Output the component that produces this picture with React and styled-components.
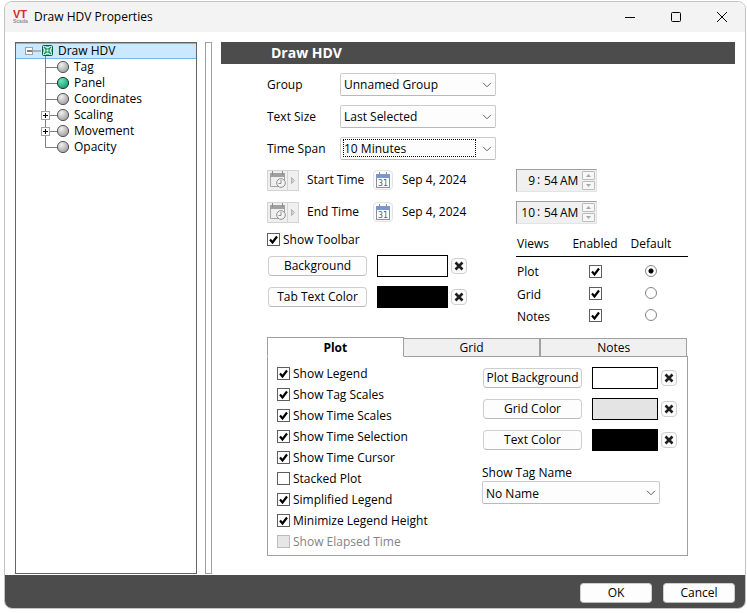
import React, { useState } from "react"
import styled, { createGlobalStyle } from "styled-components"

const GlobalStyle = createGlobalStyle`
    * {
        box-sizing: border-box;
    }
    body {
        margin: 0;
        background: #ffffff;
        color: #000000;
    }
    body, button, input, select {
        font-family: "Open Sans", "Noto Sans", sans-serif;
        font-size: 12px;
        line-height: 16px;
    }
`

const Window = styled.div`
    display: flex;
    flex-direction: column;
    min-height: calc(100vh - 5px);
    margin: 1px 1px 4px 4px;
    border: 1px solid #c3c3c3;
    border-radius: 8px;
    overflow: hidden;
    background: #ffffff;
`

const TitleBar = styled.header`
    display: flex;
    align-items: center;
    height: 30px;
    padding: 0 0 0 8px;
    background: #f3f3f3;
`

const Title = styled.h1`
    flex: 1;
    margin: 0 0 0 4px;
    font-size: 12px;
    font-weight: 400;
`

const WindowButton = styled.button`
    display: flex;
    align-items: center;
    justify-content: center;
    width: 46px;
    height: 30px;
    padding: 0;
    border: 0;
    background: transparent;
`

const Body = styled.div`
    display: flex;
    flex: 1;
    padding: 10px 10px 1px;
`

const Tree = styled.ul`
    width: 182px;
    margin: 0 8px 0 0;
    padding: 0;
    border: 1px solid #646464;
    list-style: none;
`

const TreeRow = styled.li`
    display: flex;
    align-items: center;
    height: 16px;
    padding-left: ${(props) => (props.$root ? "8px" : "24px")};
    background: ${(props) => (props.$root ? "#cce8ff" : "transparent")};
    box-shadow: ${(props) => (props.$root ? "inset 0 1px #70b8ea, inset 0 -1px #70b8ea" : "none")};
`

const TreeLabel = styled.span`
    margin-left: 5px;
`

const Splitter = styled.div`
    width: 7px;
    margin-right: 9px;
    border: 1px solid #a0a0a0;
`

const Main = styled.main`
    flex: 1;
    min-width: 0;
`

const Heading = styled.h2`
    margin: 0;
    padding: 0 50px;
    background: #4c4c4c;
    color: #ffffff;
    font-size: 14px;
    line-height: 22px;
`

const Form = styled.form`
    padding: 4px 47px 0 46px;
`

const Row = styled.div`
    display: flex;
    align-items: center;
    height: 32px;
`

const RowLabel = styled.label`
    width: 73px;
    padding-top: 2px;
`

const Columns = styled.div`
    display: grid;
    grid-template-columns: 249px 1fr;
    align-items: ${(props) => props.$align || "center"};
`

const SelectBox = styled.div`
    position: relative;
    width: ${(props) => props.$width};
    svg {
        position: absolute;
        top: 9px;
        right: 4px;
        pointer-events: none;
    }
    &::after {
        content: "";
        position: absolute;
        inset: 2px 20px 3px 3px;
        border: ${(props) => (props.$focused ? "1px dotted #000000" : "0")};
        pointer-events: none;
    }
`

const SelectInput = styled.select`
    display: block;
    width: 100%;
    height: 23px;
    padding: 2px 20px 0 3px;
    border: 1px solid #cccccc;
    border-bottom-color: #b8b8b8;
    border-radius: 2px;
    background: #fdfdfd;
    color: #000000;
    appearance: none;
    outline: none;
`

const RangeButton = styled.button`
    display: flex;
    width: 32px;
    height: 21px;
    margin-right: 8px;
    padding: 0;
    border: 1px solid #d4d4d4;
    background: #efefef;
`

const RangeLabel = styled.span`
    width: 66px;
`

const CalendarButton = styled.button`
    display: flex;
    align-items: center;
    justify-content: center;
    width: 20px;
    height: 20px;
    margin-right: 9px;
    padding: 0;
    border: 1px solid #e2e2e2;
    border-radius: 4px;
    background: #fbfbfb;
`

const TimeBox = styled.div`
    display: flex;
    align-items: center;
    width: 81px;
    height: 23px;
    border: 1px solid;
    border-color: #a0a0a0 #e3e3e3 #e3e3e3 #a0a0a0;
    background: #f0f0f0;
`

const TimePart = styled.input`
    width: ${(props) => props.$width};
    padding: 1px 0 0;
    border: 0;
    background: transparent;
    color: #000000;
    text-align: ${(props) => props.$align || "left"};
`

const Colon = styled.span`
    width: 9px;
    padding-left: 2px;
`

const Spinner = styled.div`
    display: grid;
    gap: 1px;
    margin-left: auto;
    margin-right: 1px;
`

const SpinButton = styled.button`
    display: flex;
    align-items: center;
    justify-content: center;
    width: 13px;
    height: 9px;
    padding: 0;
    border: 1px solid #bcbcbc;
    border-radius: 1px;
    background: #f7f7f7;
`

const CheckLabel = styled.label`
    display: flex;
    align-items: center;
    gap: 3px;
    height: 21px;
    color: ${(props) => (props.$disabled ? "#838383" : "#000000")};
`

const Mark = styled.span`
    display: grid;
    width: 13px;
    > * {
        grid-area: 1 / 1;
    }
    svg {
        pointer-events: none;
    }
`

const CheckInput = styled.input`
    width: 13px;
    height: 13px;
    margin: 0;
    border: 1px solid #5f5f5f;
    background: #ffffff;
    appearance: none;
    &:disabled {
        border-color: #bcbcbc;
        background: #e6e6e6;
    }
`

const RadioInput = styled.input`
    display: block;
    width: 12px;
    height: 12px;
    margin: 0 auto;
    border: 1px solid #858585;
    border-radius: 50%;
    background: #ffffff;
    appearance: none;
    &:checked {
        background: radial-gradient(circle, #000000 2px, #ffffff 3px);
    }
`

const ColorRow = styled.div`
    display: flex;
    align-items: center;
    height: 31px;
`

const Button = styled.button`
    width: ${(props) => props.$width || "99px"};
    height: 20px;
    padding: 0;
    border: 1px solid #cfcfcf;
    border-bottom-color: #bababa;
    border-radius: 4px;
    background: #fdfdfd;
    color: #000000;
`

const Swatch = styled.div`
    width: ${(props) => props.$width};
    height: 22px;
    margin: 0 3px 0 10px;
    border: 1px solid #000000;
    background: ${(props) => props.$color};
`

const ClearButton = styled.button`
    display: flex;
    align-items: center;
    justify-content: center;
    width: 16px;
    height: 16px;
    padding: 0;
    border: 1px solid #cfcfcf;
    border-radius: 4px;
    background: #fbfbfb;
`

const ToolbarGroup = styled.div`
    padding-top: 1px;
    > div {
        padding-left: 1px;
    }
`

const ViewsTable = styled.table`
    width: 100%;
    table-layout: fixed;
    border-collapse: collapse;
    th, td {
        height: 22px;
        padding: 0;
        font-weight: 400;
        text-align: center;
    }
    td {
        padding-bottom: 2px;
    }
    td > span {
        margin: 0 auto;
    }
    th:first-child {
        width: 51px;
        padding-left: 1px;
        text-align: left;
    }
    th:nth-child(2) {
        width: 56px;
    }
    th:last-child, td:last-child {
        padding-right: 9px;
    }
    thead th {
        height: 28px;
        padding-top: 5px;
        border-bottom: 1px solid #000000;
    }
    tbody th {
        padding-top: 1px;
    }
    tbody tr:first-child > * {
        height: 27px;
        padding-top: 5px;
    }
`

const Tabs = styled.div`
    display: grid;
    grid-template-columns: 137fr 137fr 147fr;
    align-items: end;
    position: relative;
    margin: 10px 1px -1px 0;
`

const Tab = styled.button`
    height: ${(props) => (props.$active ? "20px" : "19px")};
    padding: ${(props) => (props.$active ? "2px 0 0" : "0")};
    border: 1px solid #a0a0a0;
    border-bottom-color: ${(props) => (props.$active ? "#ffffff" : "#a0a0a0")};
    border-left-width: ${(props) => (props.$joined ? "0" : "1px")};
    background: ${(props) => (props.$active ? "#ffffff" : "#f0f0f0")};
    color: #000000;
    font-weight: ${(props) => (props.$active ? "700" : "400")};
`

const TabPanel = styled.div`
    display: grid;
    grid-template-columns: 205px 1fr;
    padding: 5px 9px 3px;
    border: 1px solid #a0a0a0;
`

const OptionList = styled.div`
    padding-top: 1px;
`

const TagName = styled.div`
    display: grid;
    margin: 10px 0 0;
`

const ColorList = styled.div`
    > ${ColorRow} {
        padding-left: 1px;
    }
`

const Footer = styled.footer`
    display: flex;
    justify-content: flex-end;
    gap: 11px;
    padding: 8px 10px 5px;
    background: #4c4c4c;
`

const treeItems = [
    { name: "Tag" },
    { name: "Panel", selected: true },
    { name: "Coordinates" },
    { name: "Scaling", children: true },
    { name: "Movement", children: true },
    { name: "Opacity", last: true },
]

const plotOptions = [
    ["Show Legend", true],
    ["Show Tag Scales", true],
    ["Show Time Scales", true],
    ["Show Time Selection", true],
    ["Show Time Cursor", true],
    ["Stacked Plot", false],
    ["Simplified Legend", true],
    ["Minimize Legend Height", true],
    ["Show Elapsed Time", false, true],
]

const Logo = () => (
    <svg width="17" height="18" viewBox="0 0 17 18">
        <text x="0" y="10" fontFamily="Liberation Sans, sans-serif" fontSize="11" fontWeight="700" fill="#e2242c">VT</text>
        <text x="0" y="15" fontFamily="Liberation Sans, sans-serif" fontSize="5" fontWeight="700" fill="#8c8ca0">Scada</text>
    </svg>
)

const RootIcon = () => (
    <svg width="29" height="16" viewBox="0 0 29 16">
        <rect x="1.5" y="4.5" width="7" height="7" fill="#fff" stroke="#a0a0a0" />
        <path d="M3 8h5" stroke="#000" />
        <path d="M9 8h8" stroke="#808080" />
        <path d="M21.5 13v3" stroke="#808080" />
        <rect x="18.5" y="2.5" width="10" height="10" rx="1" fill="#c9f5df" stroke="#0b5a40" />
        <path d="M20 4l7 7M27 4l-7 7" stroke="#128a5e" strokeWidth="1.3" />
        <path d="M22 3.500h3M22 11.500h3M19.500 6v3M27.500 6v3" stroke="#52c798" />
        <rect x="22" y="6" width="3" height="3" fill="#fff" stroke="#128a5e" />
    </svg>
)

const Branch = ({ item }) => (
    <svg width="29" height="16" viewBox="0 0 29 16">
        <path d={item.last ? "M5.500 0v8.500h12" : "M5.500 0v16M5.500 8.500h12"} fill="none" stroke="#808080" />
        {item.children && (
            <>
                <rect x="1.500" y="4.500" width="8" height="8" fill="#fff" stroke="#a0a0a0" />
                <path d="M3 8.500h5M5.500 6v5" stroke="#000" />
            </>
        )}
        <circle cx="23" cy="8" r="5.600" fill={item.selected ? "url(#green)" : "url(#grey)"} stroke={item.selected ? "#1d3f34" : "#585858"} />
    </svg>
)

const Chevron = () => (
    <svg width="10" height="6" viewBox="0 0 10 6">
        <path d="M1 0.800l4 4 4-4" fill="none" stroke="#606060" />
    </svg>
)

const Cross = () => (
    <svg width="10" height="10" viewBox="0 0 10 10">
        <path d="M1.500 1.500l7 7M8.500 1.500l-7 7" stroke="#1e1e1e" strokeWidth="2.600" />
    </svg>
)

const ClockIcon = () => (
    <svg width="30" height="19" viewBox="0 0 30 19">
        <path d="M2.500 3v12.500h8M16.500 3v6" fill="none" stroke="#a6a6a6" />
        <rect x="2" y="2" width="15" height="4" fill="#a0a0a0" />
        <path d="M4.500 0v4M14.500 0v4" stroke="#8c8c8c" />
        <circle cx="13" cy="12" r="4.300" fill="#f5f5f5" stroke="#8c8c8c" />
        <path d="M13 9v3.500h-2.500" fill="none" stroke="#8c8c8c" />
        <path d="M19.500 0v19" stroke="#d4d4d4" />
        <path d="M23.500 6.500v6l3-3z" fill="#d4d4d4" stroke="#b0b0b0" />
    </svg>
)

const CalendarIcon = () => (
    <svg width="16" height="16" viewBox="0 0 16 16">
        <rect x="1.500" y="2.500" width="13" height="13" fill="#fff" stroke="#8e8e96" />
        <rect x="1" y="2" width="14" height="4" fill="#7896cf" />
        <path d="M4.500 0v4M11.500 0v4" stroke="#8e8e96" />
        <text x="8" y="14" textAnchor="middle" fontFamily="DejaVu Sans, sans-serif" fontSize="8" fill="#606068">31</text>
    </svg>
)

const Select = ({ id, width, value, focused }) => (
    <SelectBox $width={width} $focused={focused}>
        <SelectInput id={id} defaultValue={value}>
            <option>{value}</option>
        </SelectInput>
        <Chevron />
    </SelectBox>
)

const Check = ({ initial, disabled, ...rest }) => {
    const [checked, setChecked] = useState(initial)
    return (
        <Mark>
            <CheckInput type="checkbox" checked={checked} disabled={disabled} onChange={() => setChecked(!checked)} {...rest} />
            {checked && (
                <svg width="13" height="13" viewBox="0 0 13 13">
                    <path d="M3 6.500l2.500 3L10 3.500" fill="none" stroke="#000" strokeWidth="2.200" />
                </svg>
            )}
        </Mark>
    )
}

const ColorPicker = ({ label, color, width }) => (
    <ColorRow>
        <Button type="button">{label}</Button>
        <Swatch $color={color} $width={width} />
        <ClearButton type="button" aria-label={"Clear " + label}>
            <Cross />
        </ClearButton>
    </ColorRow>
)

const TimeRow = ({ label, hour }) => (
    <Columns>
        <Row>
            <RangeButton type="button" aria-label={label + " range"}>
                <ClockIcon />
            </RangeButton>
            <RangeLabel>{label}</RangeLabel>
            <CalendarButton type="button" aria-label={label + " date"}>
                <CalendarIcon />
            </CalendarButton>
            <span>Sep 4, 2024</span>
        </Row>
        <TimeBox>
            <TimePart $width="18px" $align="right" aria-label={label + " hour"} defaultValue={hour} />
            <Colon>:</Colon>
            <TimePart $width="16px" aria-label={label + " minute"} defaultValue="54" />
            <TimePart $width="20px" aria-label={label + " period"} defaultValue="AM" />
            <Spinner>
                <SpinButton type="button" aria-label="Up">
                    <svg width="5" height="3"><path d="M0 3L2.500 0 5 3z" fill="#a8a8a8" /></svg>
                </SpinButton>
                <SpinButton type="button" aria-label="Down">
                    <svg width="5" height="3"><path d="M0 0l2.500 3L5 0z" fill="#a8a8a8" /></svg>
                </SpinButton>
            </Spinner>
        </TimeBox>
    </Columns>
)

const Gradients = () => (
    <svg width="0" height="0" style={{ position: "absolute" }}>
        <defs>
            <radialGradient id="grey" cx="0.350" cy="0.300" r="0.700">
                <stop offset="0" stopColor="#f0f0f0" />
                <stop offset="1" stopColor="#a2a2a2" />
            </radialGradient>
            <radialGradient id="green" cx="0.350" cy="0.300" r="0.700">
                <stop offset="0" stopColor="#6fe6bb" />
                <stop offset="1" stopColor="#16a074" />
            </radialGradient>
        </defs>
    </svg>
)

const App = () => {
    const [view, setView] = useState("Plot")

    return (
        <Window>
            <GlobalStyle />
            <Gradients />
            <TitleBar>
                <Logo />
                <Title>Draw HDV Properties</Title>
                <WindowButton aria-label="Minimize">
                    <svg width="10" height="10"><path d="M0 5.500h10" stroke="#000" /></svg>
                </WindowButton>
                <WindowButton aria-label="Maximize">
                    <svg width="10" height="10"><rect x="0.500" y="0.500" width="9" height="9" rx="1" fill="none" stroke="#000" /></svg>
                </WindowButton>
                <WindowButton aria-label="Close">
                    <svg width="10" height="10"><path d="M0 0l10 10M10 0L0 10" stroke="#000" /></svg>
                </WindowButton>
            </TitleBar>

            <Body>
                <Tree>
                    <TreeRow $root>
                        <RootIcon />
                        <TreeLabel>Draw HDV</TreeLabel>
                    </TreeRow>
                    {treeItems.map((item) => (
                        <TreeRow key={item.name}>
                            <Branch item={item} />
                            <TreeLabel>{item.name}</TreeLabel>
                        </TreeRow>
                    ))}
                </Tree>
                <Splitter />

                <Main>
                    <Heading>Draw HDV</Heading>
                    <Form>
                        <Row>
                            <RowLabel htmlFor="group">Group</RowLabel>
                            <Select id="group" width="156px" value="Unnamed Group" />
                        </Row>
                        <Row>
                            <RowLabel htmlFor="size">Text Size</RowLabel>
                            <Select id="size" width="156px" value="Last Selected" />
                        </Row>
                        <Row>
                            <RowLabel htmlFor="span">Time Span</RowLabel>
                            <Select id="span" width="156px" value="10 Minutes" focused />
                        </Row>
                        <TimeRow label="Start Time" hour="9" />
                        <TimeRow label="End Time" hour="10" />

                        <Columns $align="start">
                            <ToolbarGroup>
                                <CheckLabel>
                                    <Check initial={true} />
                                    Show Toolbar
                                </CheckLabel>
                                <ColorPicker label="Background" color="#ffffff" width="71px" />
                                <ColorPicker label="Tab Text Color" color="#000000" width="71px" />
                            </ToolbarGroup>
                            <ViewsTable>
                                <thead>
                                    <tr>
                                        <th>Views</th>
                                        <th>Enabled</th>
                                        <th>Default</th>
                                    </tr>
                                </thead>
                                <tbody>
                                    {["Plot", "Grid", "Notes"].map((name) => (
                                        <tr key={name}>
                                            <th>{name}</th>
                                            <td><Check initial={true} aria-label={name + " enabled"} /></td>
                                            <td>
                                                <RadioInput
                                                    type="radio"
                                                    name="view"
                                                    aria-label={name + " default"}
                                                    checked={view === name}
                                                    onChange={() => setView(name)}
                                                />
                                            </td>
                                        </tr>
                                    ))}
                                </tbody>
                            </ViewsTable>
                        </Columns>

                        <Tabs role="tablist">
                            <Tab type="button" role="tab" aria-selected="true" $active>Plot</Tab>
                            <Tab type="button" role="tab" $joined>Grid</Tab>
                            <Tab type="button" role="tab">Notes</Tab>
                        </Tabs>
                        <TabPanel>
                            <OptionList>
                                {plotOptions.map(([label, initial, disabled]) => (
                                    <CheckLabel key={label} $disabled={disabled}>
                                        <Check initial={initial} disabled={disabled} />
                                        {label}
                                    </CheckLabel>
                                ))}
                            </OptionList>
                            <ColorList>
                                <ColorPicker label="Plot Background" color="#ffffff" width="66px" />
                                <ColorPicker label="Grid Color" color="#e4e4e4" width="66px" />
                                <ColorPicker label="Text Color" color="#000000" width="66px" />
                                <TagName>
                                    <label htmlFor="tagName">Show Tag Name</label>
                                    <Select id="tagName" width="178px" value="No Name" />
                                </TagName>
                            </ColorList>
                        </TabPanel>
                    </Form>
                </Main>
            </Body>

            <Footer>
                <Button type="button" $width="72px">OK</Button>
                <Button type="button" $width="72px">Cancel</Button>
            </Footer>
        </Window>
    )
}

export default App
